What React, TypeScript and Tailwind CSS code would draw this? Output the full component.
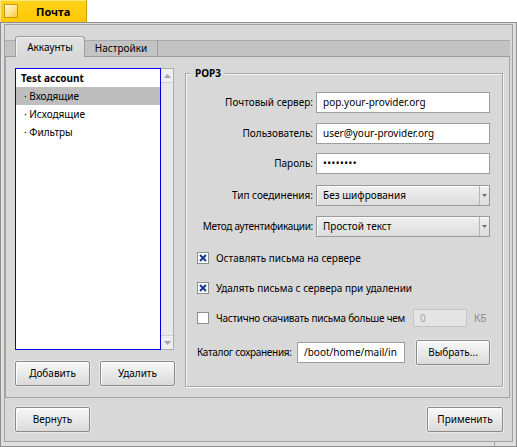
import React from "react";

function Btn({ children, className = "" }: { children: React.ReactNode; className?: string }) {
  return (
    <div
      className={
        "h-[25px] flex items-center justify-center border border-[#8a8a8a] rounded-[2px] bg-gradient-to-b from-[#f8f8f8] to-[#dadada] shadow-[inset_1px_1px_0_#ffffff,0_0_0_1px_#e6e6e6] text-black " +
        className
      }
    >
      {children}
    </div>
  );
}

function Input({ value, className = "" }: { value: React.ReactNode; className?: string }) {
  return (
    <div className={"h-[21px] bg-white border border-[#9e9e9e] flex items-center pl-[6px] whitespace-nowrap overflow-hidden " + className}>
      {value}
    </div>
  );
}

function Dropdown({ value }: { value: string }) {
  return (
    <div className="h-[21px] w-[174px] shrink-0 flex border border-[#9a9a9a] bg-gradient-to-b from-[#f0f0f0] to-[#dcdcdc] shadow-[inset_1px_1px_0_#fafafa]">
      <div className="flex-1 flex items-center pl-[6px]">{value}</div>
      <div className="w-[10px] border-l border-[#b4b4b4] flex items-center justify-center">
        <svg width="5" height="3" viewBox="0 0 5 3">
          <path d="M0 0H5L2.5 3Z" fill="#6e6e6e" />
        </svg>
      </div>
    </div>
  );
}

function Check({ checked }: { checked: boolean }) {
  return (
    <div className="w-[12px] h-[12px] shrink-0 bg-white border border-[#8e8e8e] flex items-center justify-center">
      {checked && (
        <svg width="10" height="10" viewBox="0 0 10 10">
          <path d="M2 2L8 8M8 2L2 8" stroke="#16398c" strokeWidth="2" />
        </svg>
      )}
    </div>
  );
}

function Arrow({ up }: { up: boolean }) {
  return (
    <svg width="7" height="4" viewBox="0 0 7 4">
      <path d={up ? "M0 4L3.5 0L7 4Z" : "M0 0H7L3.5 4Z"} fill="#9aa4b4" />
    </svg>
  );
}

export default function App() {
  return (
    <div className="relative w-[517px] h-[447px] bg-white flex flex-col font-['Noto_Sans',sans-serif] text-[10px] text-black">
      {/* Title tab */}
      <div className="h-[22px] w-[87px] flex items-center bg-gradient-to-b from-[#ffd21a] to-[#ffc800] border-r border-[#c9a200] shadow-[inset_1px_1px_0_#ffe680]">
        <div className="ml-[4px] w-[14px] h-[14px] border border-[#c69c00] bg-gradient-to-br from-[#fffbe6] to-[#ffc800]" />
        <div className="ml-[18px] font-bold text-[11px] leading-none">Почта</div>
      </div>

      {/* Window */}
      <div className="flex-1 flex flex-col border border-[#8e8e8e] bg-[#dedede] pt-[1px] px-[3px] pb-[4px]">
        <div className="flex-1 flex flex-col border border-[#a2a2a2] bg-[#d8d8d8]">
          {/* Tab view */}
          <div className="flex flex-col mr-[2px]">
            <div className="h-[32px] flex items-end pl-[10px] bg-[linear-gradient(to_bottom,transparent_15px,#a9a9a9_15px,#a9a9a9_16px,#c3c3c3_16px,#c3c3c3_31px,#9c9c9c_31px)]">
              <div className="h-[21px] w-[70px] flex items-center justify-center rounded-t-[3px] border-l border-t border-r border-[#9e9e9e] bg-gradient-to-b from-[#e2e2e2] to-[#d8d8d8] shadow-[inset_1px_1px_0_#f2f2f2]">
                Аккаунты
              </div>
              <div className="h-[15px] mb-[1px] w-[73px] flex items-center justify-center border-r border-[#9c9c9c]">
                Настройки
              </div>
            </div>
            <div className="flex border-l border-r border-b border-[#a4a4a4] pl-[9px] pr-[6px]">
              {/* Left column */}
              <div className="w-[160px] flex flex-col pt-[11px] pb-[11px]">
                <div className="h-[282px] flex">
                  <div className="w-[146px] border border-[#0000e5] bg-white flex flex-col">
                    <div className="h-[18px] flex items-center pl-[5px] font-bold">Test account</div>
                    <div className="h-[18px] flex items-center pl-[8px] bg-[#bebebe]">· Входящие</div>
                    <div className="h-[18px] flex items-center pl-[8px]">· Исходящие</div>
                    <div className="h-[18px] flex items-center pl-[8px]">· Фильтры</div>
                  </div>
                  <div className="w-[13px] flex flex-col border-t border-r border-b border-[#acacac] bg-[#e9e9e9]">
                    <div className="h-[14px] flex items-center justify-center border-b border-[#d0d0d0] bg-[#eeeeee]">
                      <Arrow up={true} />
                    </div>
                    <div className="flex-1" />
                    <div className="h-[14px] flex items-center justify-center border-t border-[#d0d0d0] bg-[#eeeeee]">
                      <Arrow up={false} />
                    </div>
                  </div>
                </div>
                <div className="mt-[11px] flex justify-between">
                  <Btn className="w-[75px]">Добавить</Btn>
                  <Btn className="w-[75px]">Удалить</Btn>
                </div>
              </div>

              {/* POP3 box */}
              <div className="ml-[10px] mt-[16px] mb-[10px] w-[318px] relative border border-[#a6a6a6] shadow-[inset_1px_1px_0_#f4f4f4,1px_1px_0_#f4f4f4] flex flex-col pt-[18px] pl-[11px] pr-[12px] pb-[21px]">
                <div className="absolute left-[5px] -top-[8px] px-[4px] bg-[#d8d8d8] font-bold leading-[14px]">POP3</div>

                <div className="h-[21px] flex items-center">
                  <div className="flex-1 text-right pr-[3px] whitespace-nowrap">Почтовый сервер:</div>
                  <Input className="w-[174px] shrink-0" value="pop.your-provider.org" />
                </div>
                <div className="mt-[10px] h-[21px] flex items-center">
                  <div className="flex-1 text-right pr-[3px] whitespace-nowrap">Пользователь:</div>
                  <Input className="w-[174px] shrink-0" value="user@your-provider.org" />
                </div>
                <div className="mt-[9px] h-[21px] flex items-center">
                  <div className="flex-1 text-right pr-[3px] whitespace-nowrap">Пароль:</div>
                  <Input className="w-[174px] shrink-0 tracking-[0.5px]" value="••••••••" />
                </div>
                <div className="mt-[11px] h-[21px] flex items-center">
                  <div className="flex-1 text-right pr-[3px] whitespace-nowrap">Тип соединения:</div>
                  <Dropdown value="Без шифрования" />
                </div>
                <div className="mt-[10px] h-[21px] flex items-center">
                  <div className="flex-1 text-right pr-[3px] whitespace-nowrap tracking-[-0.3px]">Метод аутентификации:</div>
                  <Dropdown value="Простой текст" />
                </div>

                <div className="mt-[11px] h-[20px] flex items-center">
                  <Check checked={true} />
                  <div className="ml-[7px]">Оставлять письма на сервере</div>
                </div>
                <div className="mt-[10px] h-[20px] flex items-center">
                  <Check checked={true} />
                  <div className="ml-[7px]">Удалять письма с сервера при удалении</div>
                </div>
                <div className="mt-[10px] h-[20px] flex items-center">
                  <Check checked={false} />
                  <div className="ml-[7px] flex-1 whitespace-nowrap tracking-[-0.25px]">Частично скачивать письма больше чем</div>
                  <div className="w-[54px] h-[18px] shrink-0 border border-[#c4c4c4] bg-[#e4e4e4] flex items-center pl-[6px] text-[#a4a4a4]">0</div>
                  <div className="ml-[7px] w-[16px] shrink-0 text-[#8e8e8e]">КБ</div>
                </div>

                <div className="mt-[12px] h-[25px] flex items-center">
                  <div className="flex-1 whitespace-nowrap tracking-[-0.3px]">Каталог сохранения:</div>
                  <Input className="w-[108px] shrink-0" value="/boot/home/mail/in" />
                  <Btn className="ml-[11px] w-[74px] shrink-0">Выбрать...</Btn>
                </div>
              </div>
            </div>
          </div>

          {/* Bottom buttons */}
          <div className="flex-1 flex items-center justify-between pl-[10px] pr-[9px]">
            <Btn className="w-[75px]">Вернуть</Btn>
            <Btn className="w-[76px]">Применить</Btn>
          </div>
        </div>
      </div>
      <div className="absolute left-[494px] top-[441px] w-px h-[5px] bg-[#a6a6a6]" />
    </div>
  );
}
